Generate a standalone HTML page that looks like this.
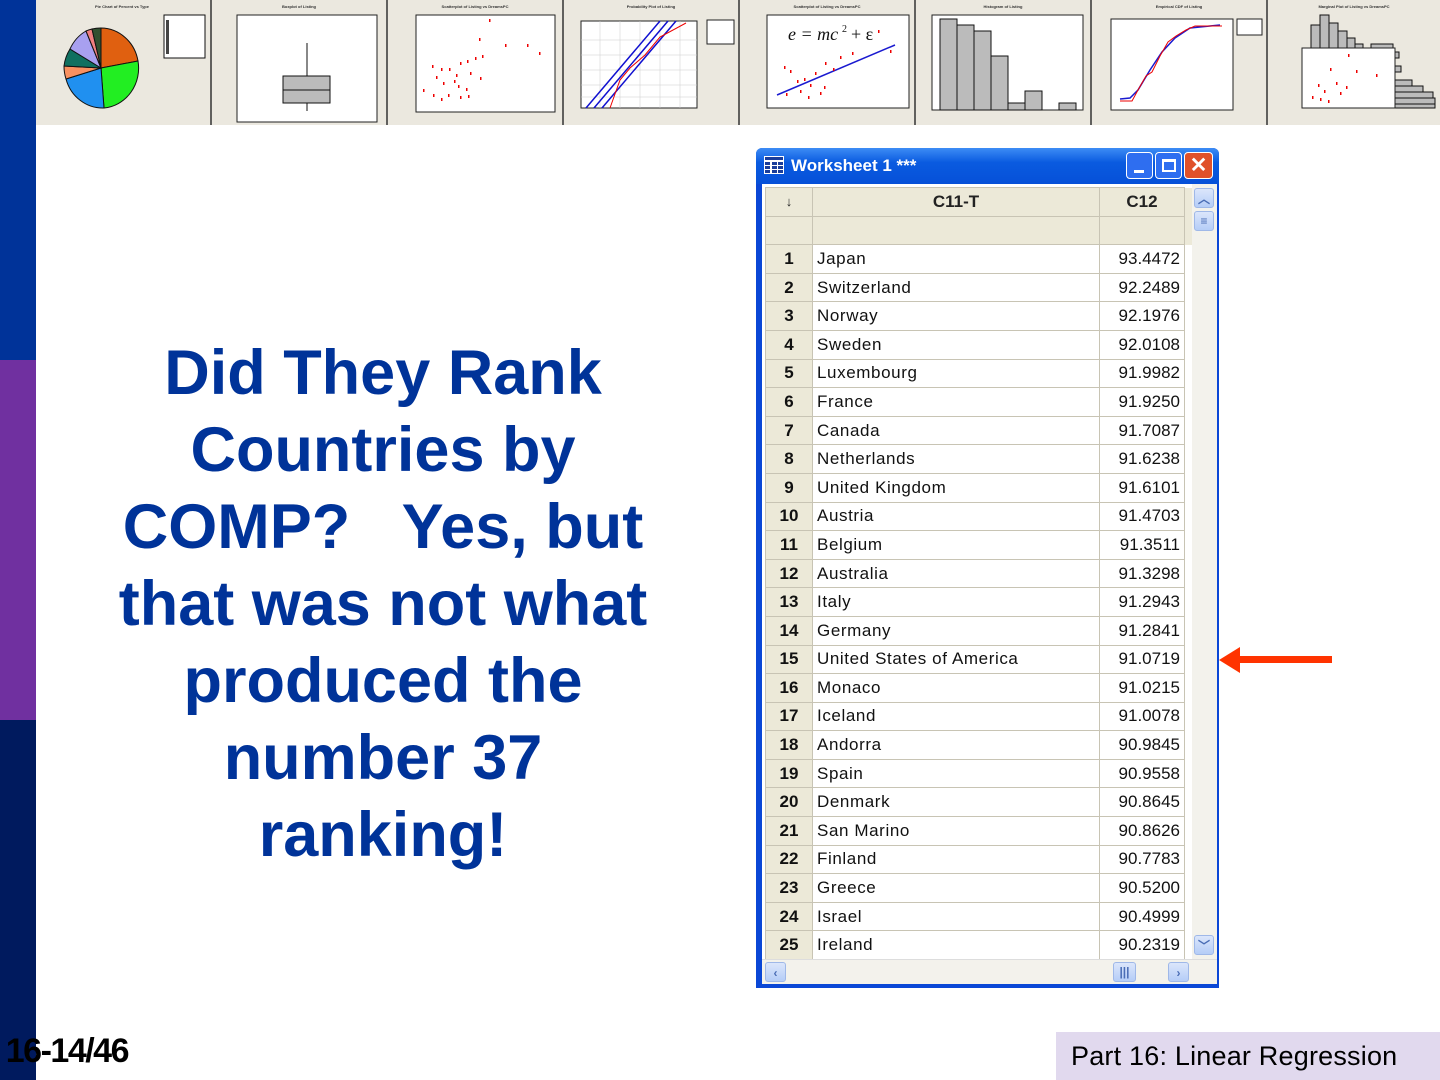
<!DOCTYPE html>
<html><head><meta charset="utf-8"><style>
*{margin:0;padding:0;box-sizing:border-box}
body{width:1440px;height:1080px;position:relative;background:#fff;overflow:hidden;font-family:"Liberation Sans",sans-serif}
.bar{position:absolute;left:0;width:36px}
#title{position:absolute;left:60px;width:646px;top:335px;text-align:center;color:#003399;font-weight:bold;font-size:63px;line-height:77px;white-space:nowrap}
#win{position:absolute;left:756px;top:148px;width:463px;height:840px;background:#0a47d6;border-radius:6px 6px 0 0}
#tb{position:absolute;left:0;top:0;width:463px;height:36px;background:linear-gradient(#3d8cf5,#0a5be0 40%,#0650d8);border-radius:6px 6px 0 0;color:#fff;font-weight:bold;font-size:17px}
#body{position:absolute;left:6px;top:36px;width:455px;height:800px;background:#fff;overflow:hidden}
table{border-collapse:collapse;position:absolute;left:3px;top:3px;font-size:17px}
td{border:1px solid #c8c4b4;height:28.6px;padding:0;white-space:nowrap}
td.n{width:47px;background:#ece9d8;text-align:center;font-weight:bold;color:#111;font-size:17px}
td.c{width:287px;padding-left:4px;color:#111;letter-spacing:0.6px}
td.v{width:85px;text-align:right;padding-right:4px;color:#111}
tr.h td{background:#ece9d8;text-align:center;font-weight:bold;color:#222;padding:0}
#vs{position:absolute;left:430px;top:0;width:25px;height:775px;background:#f3f2ec}
#hs{position:absolute;left:0;top:775px;width:455px;height:25px;background:#f3f2ec;border-top:1px solid #ddd}
.sb{position:absolute;background:linear-gradient(#dbe6fb,#b5cdf7);border:1px solid #9fb8e8;border-radius:3px;color:#4a6db5;font-size:12px;text-align:center;font-weight:bold}
#pg{position:absolute;left:-40px;top:1032px;width:168px;text-align:right;font-weight:bold;font-size:34px;color:#000;letter-spacing:-1.5px}
#ft{position:absolute;left:1056px;top:1032px;width:384px;height:48px;background:#e1d9ee;font-size:27px;color:#000;padding:9px 0 0 15px;letter-spacing:0.2px}
</style></head><body>
<svg style="position:absolute;left:0;top:0" width="1440" height="126">
<rect x="36" y="0" width="1404" height="125" fill="#ebe8df"/>
<g stroke="#333" stroke-width="1.5">
<line x1="211" y1="0" x2="211" y2="125"/><line x1="387" y1="0" x2="387" y2="125"/><line x1="563" y1="0" x2="563" y2="125"/><line x1="739" y1="0" x2="739" y2="125"/><line x1="915" y1="0" x2="915" y2="125"/><line x1="1091" y1="0" x2="1091" y2="125"/><line x1="1267" y1="0" x2="1267" y2="125"/>
</g>
<g font-size="4" fill="#333" text-anchor="middle" font-weight="bold">
<text x="122" y="8">Pie Chart of Percent vs Type</text><text x="299" y="8">Boxplot of Listing</text><text x="475" y="8">Scatterplot of Listing vs DreamsPC</text><text x="651" y="8">Probability Plot of Listing</text><text x="827" y="8">Scatterplot of Listing vs DreamsPC</text><text x="1003" y="8">Histogram of Listing</text><text x="1179" y="8">Empirical CDF of Listing</text><text x="1354" y="8">Marginal Plot of Listing vs DreamsPC</text>
</g>
<g stroke="#111" stroke-width="1">
<path d="M101 68 L101 28 A38 40 0 0 1 138 61 Z" fill="#e06010"/>
<path d="M101 68 L138 61 A38 40 0 0 1 104 108 Z" fill="#22ee22"/>
<path d="M101 68 L104 108 A38 40 0 0 1 66 79 Z" fill="#2090f0"/>
<path d="M101 68 L66 79 A38 40 0 0 1 64 66 Z" fill="#f89060"/>
<path d="M101 68 L64 66 A38 40 0 0 1 70 49 Z" fill="#107060"/>
<path d="M101 68 L70 49 A38 40 0 0 1 86 31 Z" fill="#a8a0f0"/>
<path d="M101 68 L86 31 A38 40 0 0 1 92 29 Z" fill="#f08080"/>
<path d="M101 68 L92 29 A38 40 0 0 1 101 28 Z" fill="#305030"/>
</g>
<rect x="164" y="15" width="41" height="43" fill="#fff" stroke="#111"/>
<g fill="#444"><rect x="166" y="20" width="3" height="34"/></g>
<rect x="237" y="15" width="140" height="107" fill="#fff" stroke="#222"/>
<line x1="307" y1="43" x2="307" y2="111" stroke="#111"/>
<rect x="283" y="76" width="47" height="27" fill="#bbb" stroke="#111"/>
<line x1="283" y1="90" x2="330" y2="90" stroke="#111"/>
<rect x="416" y="15" width="139" height="97" fill="#fff" stroke="#222"/>
<g fill="#e00">
<rect x="489" y="19" width="1.5" height="3"/><rect x="479" y="38" width="1.5" height="3"/><rect x="527" y="44" width="1.5" height="3"/><rect x="505" y="44" width="1.5" height="3"/><rect x="539" y="52" width="1.5" height="3"/><rect x="467" y="60" width="1.5" height="3"/><rect x="475" y="57" width="1.5" height="3"/><rect x="482" y="55" width="1.5" height="3"/><rect x="460" y="62" width="1.5" height="3"/><rect x="432" y="65" width="1.5" height="3"/><rect x="441" y="68" width="1.5" height="3"/><rect x="449" y="68" width="1.5" height="3"/><rect x="456" y="74" width="1.5" height="3"/><rect x="436" y="76" width="1.5" height="3"/><rect x="470" y="72" width="1.5" height="3"/><rect x="480" y="77" width="1.5" height="3"/><rect x="454" y="80" width="1.5" height="3"/><rect x="443" y="82" width="1.5" height="3"/><rect x="458" y="85" width="1.5" height="3"/><rect x="423" y="89" width="1.5" height="3"/><rect x="466" y="88" width="1.5" height="3"/><rect x="433" y="94" width="1.5" height="3"/><rect x="448" y="94" width="1.5" height="3"/><rect x="460" y="96" width="1.5" height="3"/><rect x="468" y="95" width="1.5" height="3"/><rect x="441" y="98" width="1.5" height="3"/>
</g>
<rect x="581" y="21" width="116" height="87" fill="#fff" stroke="#222"/>
<g stroke="#ccc" stroke-width="0.5"><line x1="600" y1="21" x2="600" y2="108"/><line x1="620" y1="21" x2="620" y2="108"/><line x1="640" y1="21" x2="640" y2="108"/><line x1="660" y1="21" x2="660" y2="108"/><line x1="680" y1="21" x2="680" y2="108"/><line x1="581" y1="40" x2="697" y2="40"/><line x1="581" y1="55" x2="697" y2="55"/><line x1="581" y1="70" x2="697" y2="70"/><line x1="581" y1="85" x2="697" y2="85"/><line x1="581" y1="97" x2="697" y2="97"/></g>
<g stroke="#1010d0" stroke-width="1.5" fill="none"><line x1="586" y1="108" x2="660" y2="21"/><line x1="594" y1="108" x2="668" y2="21"/><line x1="602" y1="108" x2="676" y2="21"/></g>
<path d="M610 108 L620 80 L630 68 L645 55 L660 37 L686 23" stroke="#e00" fill="none"/>
<rect x="707" y="20" width="27" height="24" fill="#fff" stroke="#222"/>
<rect x="767" y="15" width="142" height="93" fill="#fff" stroke="#222"/>
<text x="788" y="40" font-family="Liberation Serif,serif" font-style="italic" font-size="18" fill="#111">e = mc</text><text x="842" y="32" font-family="Liberation Serif,serif" font-size="10" fill="#111">2</text><text x="851" y="40" font-family="Liberation Serif,serif" font-size="18" fill="#111">+ ε</text>
<line x1="777" y1="95" x2="895" y2="45" stroke="#1a1ad0" stroke-width="1.5"/>
<g fill="#e00"><rect x="784" y="66" width="1.5" height="3"/><rect x="790" y="70" width="1.5" height="3"/><rect x="797" y="80" width="1.5" height="3"/><rect x="804" y="78" width="1.5" height="3"/><rect x="810" y="84" width="1.5" height="3"/><rect x="786" y="93" width="1.5" height="3"/><rect x="800" y="90" width="1.5" height="3"/><rect x="815" y="72" width="1.5" height="3"/><rect x="825" y="62" width="1.5" height="3"/><rect x="833" y="68" width="1.5" height="3"/><rect x="840" y="56" width="1.5" height="3"/><rect x="852" y="52" width="1.5" height="3"/><rect x="878" y="30" width="1.5" height="3"/><rect x="890" y="50" width="1.5" height="3"/><rect x="820" y="92" width="1.5" height="3"/><rect x="808" y="96" width="1.5" height="3"/><rect x="824" y="86" width="1.5" height="3"/></g>
<rect x="932" y="15" width="151" height="95" fill="#fff" stroke="#222"/>
<g fill="#bbb" stroke="#111"><rect x="940" y="19" width="17" height="91"/><rect x="957" y="25" width="17" height="85"/><rect x="974" y="31" width="17" height="79"/><rect x="991" y="56" width="17" height="54"/><rect x="1008" y="103" width="17" height="7"/><rect x="1025" y="91" width="17" height="19"/><rect x="1059" y="103" width="17" height="7"/></g>
<rect x="1111" y="19" width="122" height="91" fill="#fff" stroke="#222"/>
<path d="M1120 99 L1130 98 L1138 90 L1150 70 L1162 52 L1175 38 L1190 28 L1220 25" stroke="#1a1ad0" stroke-width="1.5" fill="none"/>
<path d="M1120 101 L1132 101 L1138 90 L1146 76 L1152 72 L1160 56 L1168 42 L1176 36 L1186 30 L1195 26 L1222 26" stroke="#e00" fill="none"/>
<rect x="1237" y="19" width="25" height="16" fill="#fff" stroke="#222"/>
<g fill="#bbb" stroke="#111"><rect x="1311" y="25" width="9" height="23"/><rect x="1320" y="15" width="9" height="33"/><rect x="1329" y="23" width="9" height="25"/><rect x="1338" y="31" width="9" height="17"/><rect x="1347" y="38" width="8" height="10"/><rect x="1355" y="44" width="8" height="4"/><rect x="1371" y="44" width="22" height="4"/>
<rect x="1395" y="52" width="4" height="6"/><rect x="1395" y="66" width="6" height="6"/><rect x="1395" y="80" width="17" height="6"/><rect x="1395" y="86" width="28" height="6"/><rect x="1395" y="92" width="38" height="6"/><rect x="1395" y="98" width="40" height="6"/><rect x="1395" y="104" width="40" height="4"/></g>
<rect x="1302" y="48" width="93" height="60" fill="#fff" stroke="#222"/>
<g fill="#e00"><rect x="1348" y="54" width="1.5" height="3"/><rect x="1330" y="68" width="1.5" height="3"/><rect x="1356" y="70" width="1.5" height="3"/><rect x="1318" y="84" width="1.5" height="3"/><rect x="1324" y="90" width="1.5" height="3"/><rect x="1336" y="82" width="1.5" height="3"/><rect x="1312" y="96" width="1.5" height="3"/><rect x="1328" y="100" width="1.5" height="3"/><rect x="1340" y="92" width="1.5" height="3"/><rect x="1320" y="98" width="1.5" height="3"/><rect x="1376" y="74" width="1.5" height="3"/><rect x="1346" y="86" width="1.5" height="3"/></g>
</svg>
<div class="bar" style="top:0;height:360px;background:#003399"></div>
<div class="bar" style="top:360px;height:360px;background:#7030a0"></div>
<div class="bar" style="top:720px;height:360px;background:#001a5e"></div>

<div id="title">Did They Rank<br>Countries by<br>COMP?&nbsp;&nbsp; Yes, but<br>that was not what<br>produced the<br>number 37<br>ranking!</div>

<div id="win">
<div id="tb">
<svg style="position:absolute;left:8px;top:8px" width="20" height="18"><rect x="0" y="0" width="20" height="18" fill="#fff"/><g fill="#1a3d9a"><rect x="1" y="1" width="18" height="3"/><rect x="1" y="6" width="5" height="3"/><rect x="8" y="6" width="5" height="3"/><rect x="14" y="6" width="5" height="3"/><rect x="1" y="10" width="5" height="3"/><rect x="8" y="10" width="5" height="3"/><rect x="14" y="10" width="5" height="3"/><rect x="1" y="14" width="5" height="3"/><rect x="8" y="14" width="5" height="3"/><rect x="14" y="14" width="5" height="3"/></g></svg>
<span style="position:absolute;left:35px;top:8px">Worksheet 1 ***</span>
<div style="position:absolute;left:370px;top:4px;width:27px;height:27px;border:1px solid #fff;border-radius:4px;background:#2e6ef0"><div style="position:absolute;left:7px;top:17px;width:10px;height:3px;background:#fff"></div></div>
<div style="position:absolute;left:399px;top:4px;width:27px;height:27px;border:1px solid #fff;border-radius:4px;background:#2e6ef0"><div style="position:absolute;left:6px;top:6px;width:14px;height:13px;border:2px solid #fff;border-top-width:3px"></div></div>
<div style="position:absolute;left:428px;top:4px;width:29px;height:27px;border:1px solid #fff;border-radius:4px;background:#e0512a;text-align:center;font-size:21px;line-height:25px">✕</div>
</div>
<div id="body">
<table>
<tr class="h"><td class="n" style="font-size:13px">↓</td><td class="c" style="padding:0;letter-spacing:0">C11-T</td><td class="v" style="text-align:center;padding:0">C12</td><td style="width:8px;border:none"></td></tr>
<tr class="h"><td class="n"></td><td class="c"></td><td class="v"></td><td style="border:none"></td></tr>
<tr><td class="n">1</td><td class="c">Japan</td><td class="v">93.4472</td></tr>
<tr><td class="n">2</td><td class="c">Switzerland</td><td class="v">92.2489</td></tr>
<tr><td class="n">3</td><td class="c">Norway</td><td class="v">92.1976</td></tr>
<tr><td class="n">4</td><td class="c">Sweden</td><td class="v">92.0108</td></tr>
<tr><td class="n">5</td><td class="c">Luxembourg</td><td class="v">91.9982</td></tr>
<tr><td class="n">6</td><td class="c">France</td><td class="v">91.9250</td></tr>
<tr><td class="n">7</td><td class="c">Canada</td><td class="v">91.7087</td></tr>
<tr><td class="n">8</td><td class="c">Netherlands</td><td class="v">91.6238</td></tr>
<tr><td class="n">9</td><td class="c">United Kingdom</td><td class="v">91.6101</td></tr>
<tr><td class="n">10</td><td class="c">Austria</td><td class="v">91.4703</td></tr>
<tr><td class="n">11</td><td class="c">Belgium</td><td class="v">91.3511</td></tr>
<tr><td class="n">12</td><td class="c">Australia</td><td class="v">91.3298</td></tr>
<tr><td class="n">13</td><td class="c">Italy</td><td class="v">91.2943</td></tr>
<tr><td class="n">14</td><td class="c">Germany</td><td class="v">91.2841</td></tr>
<tr><td class="n">15</td><td class="c">United States of America</td><td class="v">91.0719</td></tr>
<tr><td class="n">16</td><td class="c">Monaco</td><td class="v">91.0215</td></tr>
<tr><td class="n">17</td><td class="c">Iceland</td><td class="v">91.0078</td></tr>
<tr><td class="n">18</td><td class="c">Andorra</td><td class="v">90.9845</td></tr>
<tr><td class="n">19</td><td class="c">Spain</td><td class="v">90.9558</td></tr>
<tr><td class="n">20</td><td class="c">Denmark</td><td class="v">90.8645</td></tr>
<tr><td class="n">21</td><td class="c">San Marino</td><td class="v">90.8626</td></tr>
<tr><td class="n">22</td><td class="c">Finland</td><td class="v">90.7783</td></tr>
<tr><td class="n">23</td><td class="c">Greece</td><td class="v">90.5200</td></tr>
<tr><td class="n">24</td><td class="c">Israel</td><td class="v">90.4999</td></tr>
<tr><td class="n">25</td><td class="c">Ireland</td><td class="v">90.2319</td></tr>
<tr><td class="n"></td><td class="c"></td><td class="v"></td></tr>
</table>
<div id="vs">
<div class="sb" style="left:2px;top:4px;width:20px;height:20px;line-height:20px">︿</div>
<div class="sb" style="left:2px;top:27px;width:20px;height:20px;line-height:18px">≡</div>
<div class="sb" style="left:2px;top:751px;width:20px;height:20px;line-height:20px">﹀</div>
</div>
<div id="hs">
<div class="sb" style="left:3px;top:2px;width:21px;height:20px;line-height:20px">‹</div>
<div class="sb" style="left:351px;top:2px;width:23px;height:20px;line-height:18px">|||</div>
<div class="sb" style="left:406px;top:2px;width:21px;height:20px;line-height:20px">›</div>
</div>
</div>
</div>

<svg style="position:absolute;left:1215px;top:640px" width="125" height="40"><polygon points="4,20 25,7 25,33" fill="#ff3300"/><rect x="23" y="16" width="94" height="7" fill="#ff3300"/></svg>

<div id="pg">16-14/46</div>
<div id="ft">Part 16: Linear Regression</div>
</body></html>
